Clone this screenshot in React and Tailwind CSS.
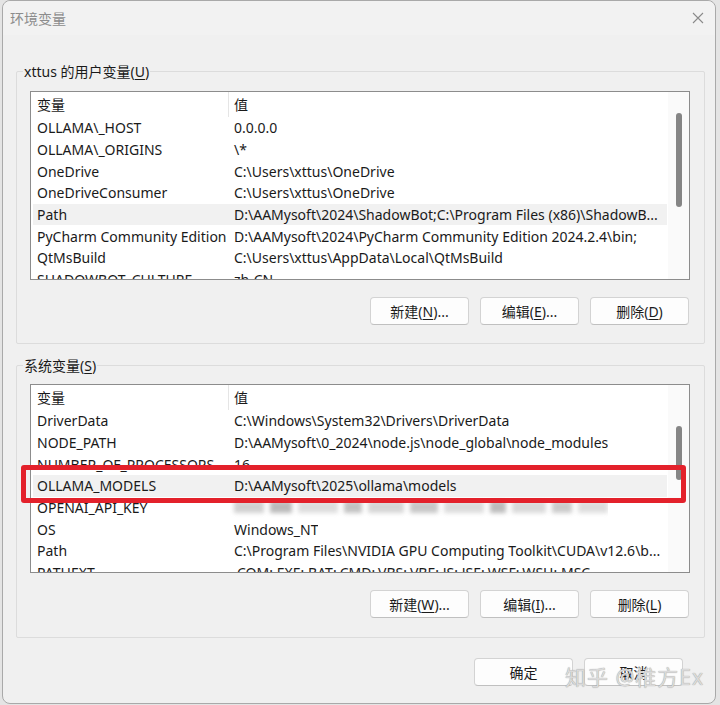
import React from 'react';

const USER_VARS = [
  ['OLLAMA\\_HOST', '0.0.0.0'],
  ['OLLAMA\\_ORIGINS', '\\*'],
  ['OneDrive', 'C:\\Users\\xttus\\OneDrive'],
  ['OneDriveConsumer', 'C:\\Users\\xttus\\OneDrive'],
  ['Path', 'D:\\AAMysoft\\2024\\ShadowBot;C:\\Program Files (x86)\\ShadowB...'],
  ['PyCharm Community Edition', 'D:\\AAMysoft\\2024\\PyCharm Community Edition 2024.2.4\\bin;'],
  ['QtMsBuild', 'C:\\Users\\xttus\\AppData\\Local\\QtMsBuild'],
  ['SHADOWBOT_CULTURE', 'zh-CN'],
];

const SYSTEM_VARS = [
  ['DriverData', 'C:\\Windows\\System32\\Drivers\\DriverData'],
  ['NODE_PATH', 'D:\\AAMysoft\\0_2024\\node.js\\node_global\\node_modules'],
  ['NUMBER_OF_PROCESSORS', '16'],
  ['OLLAMA_MODELS', 'D:\\AAMysoft\\2025\\ollama\\models'],
  ['OPENAI_API_KEY', null],
  ['OS', 'Windows_NT'],
  ['Path', 'C:\\Program Files\\NVIDIA GPU Computing Toolkit\\CUDA\\v12.6\\b...'],
  ['PATHEXT', '.COM;.EXE;.BAT;.CMD;.VBS;.VBE;.JS;.JSE;.WSF;.WSH;.MSC'],
];

// blurred-out api key
function BlurredValue() {
  return (
    <div className="flex items-center gap-[6px] h-full blur-[2px] opacity-70">
      <div className="w-[30px] h-[12px] bg-[#bdbdbd]" />
      <div className="w-[22px] h-[12px] bg-[#9e9e9e]" />
      <div className="w-[40px] h-[12px] bg-[#cfcfcf]" />
      <div className="w-[18px] h-[12px] bg-[#a8a8a8]" />
      <div className="w-[36px] h-[12px] bg-[#c4c4c4]" />
      <div className="w-[28px] h-[12px] bg-[#b0b0b0]" />
      <div className="w-[40px] h-[12px] bg-[#cdcdcd]" />
      <div className="w-[16px] h-[12px] bg-[#a0a0a0]" />
      <div className="w-[34px] h-[12px] bg-[#c9c9c9]" />
      <div className="w-[20px] h-[12px] bg-[#b5b5b5]" />
      <div className="w-[30px] h-[12px] bg-[#d0d0d0]" />
    </div>
  );
}

function VarList({ rows, selected, thumbTop, thumbHeight }) {
  return (
    <div className="ml-[13px] mr-[14px] h-[189px] border border-[#8c8c8c] bg-white flex">
      <div className="flex-1 min-w-0 overflow-hidden pl-[2px] pr-[1px]">
        <div className="flex h-[25px] items-center">
          <div className="w-[196px] h-full flex items-center pl-[4px] border-r border-[#e5e5e5]">变量</div>
          <div className="pl-[5px]">值</div>
        </div>
        {rows.map(([name, value], i) => (
          <div
            key={name + i}
            className={`flex h-[21.67px] items-center whitespace-nowrap ${i === selected ? 'bg-[#f1f1f1]' : ''}`}
          >
            <div className="w-[197px] shrink-0 pl-[4px] overflow-hidden">{name}</div>
            <div className="pl-[4px] h-full flex items-center overflow-hidden">
              {value === null ? <BlurredValue /> : value}
            </div>
          </div>
        ))}
      </div>
      <div className={`w-[21px] shrink-0 bg-[#fafafa] flex justify-center ${thumbTop}`}>
        <div className={`w-[6px] rounded-[3px] bg-[#858585] ${thumbHeight}`} />
      </div>
    </div>
  );
}

function Btn({ label, k, tail = '', wide = 'w-[99px]' }) {
  return (
    <button className={`${wide} h-[28px] rounded-[4px] border border-[#d3d3d3] border-b-[#c0c0c0] bg-[#fdfdfd] text-[14px] text-[#1b1b1b] flex items-center justify-center`}>
      {label}
      {k && (
        <>
          (<span className="underline underline-offset-2">{k}</span>){tail}
        </>
      )}
    </button>
  );
}

function GroupBox({ title, k, className = '', children }) {
  return (
    <div className={`mx-[13px] mr-[10px] border border-[#dcdcdc] rounded-[2px] flex flex-col ${className}`}>
      <div className="-mt-[10px] ml-[6px] px-[1px] h-[20px] leading-[20px] self-start bg-[#f0f0f0]">
        {title}(<span className="underline underline-offset-2">{k}</span>)
      </div>
      {children}
    </div>
  );
}

export default function App() {
  return (
    <div className="relative w-[720px] h-[705px] bg-[#e4e4e4] overflow-hidden text-[14px] text-[#1a1a1a] font-[family-name:'Noto_Sans','Noto_Sans_CJK_SC',sans-serif]">
      <div className="ml-[2px] w-[714px] h-[704px] border border-[#a9a9a9] rounded-[8px] bg-[#f0f0f0] flex flex-col">
        {/* Title bar */}
        <div className="h-[34px] flex items-center justify-between pl-[7px] pr-[10px] bg-[#f2f2f2] rounded-t-[8px]">
          <span className="text-[#8d8d8d]">环境变量</span>
          <svg width="14" height="14" viewBox="0 0 14 14" className="text-[#8a8a8a]">
            <path d="M2 2 L12 12 M12 2 L2 12" stroke="currentColor" strokeWidth="1.1" fill="none" />
          </svg>
        </div>

        {/* User variables */}
        <GroupBox title="xttus 的用户变量" k="U" className="mt-[36px] pb-[18px]">
          <div className="mt-[9px]">
            <VarList rows={USER_VARS} selected={4} thumbTop="pt-[21px]" thumbHeight="h-[94px]" />
          </div>
          <div className="mt-[17px] flex justify-end gap-[11px] pr-[15px]">
            <Btn label="新建" k="N" tail="..." />
            <Btn label="编辑" k="E" tail="..." />
            <Btn label="删除" k="D" />
          </div>
        </GroupBox>

        {/* System variables */}
        <GroupBox title="系统变量" k="S" className="mt-[21px] pb-[19px]">
          <div className="mt-[8px]">
            <VarList rows={SYSTEM_VARS} selected={3} thumbTop="pt-[41px]" thumbHeight="h-[54px]" />
          </div>
          <div className="mt-[17px] flex justify-end gap-[11px] pr-[15px]">
            <Btn label="新建" k="W" tail="..." />
            <Btn label="编辑" k="I" tail="..." />
            <Btn label="删除" k="L" />
          </div>
        </GroupBox>

        {/* OK / Cancel */}
        <div className="mt-[20px] flex justify-end gap-[11px] pr-[32px]">
          <Btn label="确定" />
          <Btn label="取消" />
        </div>
      </div>

      {/* Red annotation box */}
      <div className="absolute left-[21px] top-[465px] w-[665px] h-[38px] border-[5px] border-[#e3212b] rounded-[3px]" />

      {/* Watermark */}
      <div className="absolute left-[565px] top-[662px] text-[21px] tracking-[1px] text-[#dadada] [text-shadow:0_0_1px_#8a8a8a] whitespace-nowrap">
        知乎 @椎方Ex
      </div>
    </div>
  );
}
